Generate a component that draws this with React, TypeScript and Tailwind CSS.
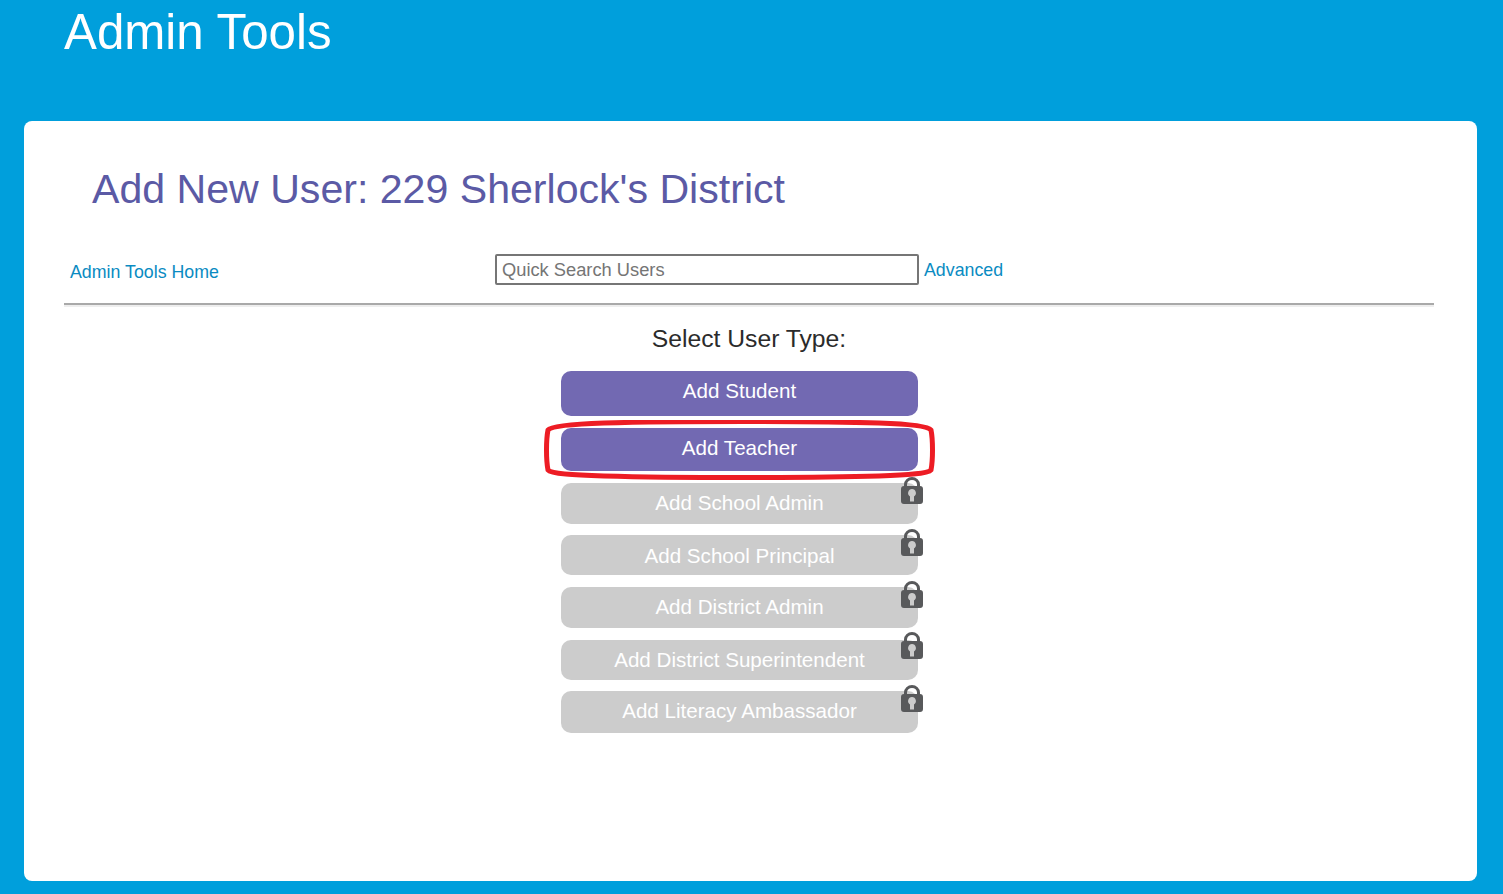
import React from "react";

function Lock({ cls }: { cls: string }) {
  return (
    <svg viewBox="0 0 22 27" className={`absolute left-[340px] h-[27px] w-[22px] ${cls}`}>
      <path d="M4.5 11V7.5a6.5 6 0 0 1 13 0V11" fill="none" stroke="#58595b" strokeWidth="3" />
      <path fillRule="evenodd" fill="#58595b" d="M3 9h16a3 3 0 0 1 3 3v12a3 3 0 0 1-3 3H3a3 3 0 0 1-3-3V12a3 3 0 0 1 3-3zM11 12a4 4 0 0 0-2 7.4V24.500h4V19.400a4 4 0 0 0-2-7.400z" />
    </svg>
  );
}

const locked: { label: string; cls: string; lock: string }[] = [
  { label: "Add School Admin", cls: "h-[41px] mt-[12px] pt-[8px]", lock: "top-[-6px]" },
  { label: "Add School Principal", cls: "h-[40px] mt-[11px] pt-[9px]", lock: "top-[-6px]" },
  { label: "Add District Admin", cls: "h-[41px] mt-[12px] pt-[8px]", lock: "top-[-6px]" },
  { label: "Add District Superintendent", cls: "h-[40px] mt-[12px] pt-[8px]", lock: "top-[-8px]" },
  { label: "Add Literacy Ambassador", cls: "h-[42px] mt-[11px] pt-[8px]", lock: "top-[-6px]" },
];

export default function App() {
  return (
    <div className="min-h-[894px] bg-[#009fdc] font-['Liberation_Sans',Arial,sans-serif] overflow-hidden">
      <header className="h-[121px] pl-[64px] pt-[4px]">
        <h1 className="text-[49.3px] leading-[55px] text-white">Admin Tools</h1>
      </header>
      <main className="ml-[24px] mr-[26px] h-[760px] rounded-[8px] bg-white pt-[44px] pl-[40px] pr-[43px]">
        <h2 className="pl-[28px] text-[41.1px] leading-[48px] text-[#5b5aa5]">Add New User: 229 Sherlock's District</h2>
        <div className="mt-[42px] flex h-[50px] items-start border-b-2 border-[#a9a9a9] shadow-[0_2px_0_#eeeeee]">
          <a className="ml-[6px] mt-[7px] w-[425px] text-[17.8px] leading-[21px] text-[#0a8bc2]">Admin Tools Home</a>
          <input
            readOnly
            placeholder="Quick Search Users"
            className="-mt-[1px] h-[31px] w-[424px] rounded-[2px] border-2 border-[#767676] px-[5px] text-[18.3px] text-[#757575] placeholder:text-[#757575] outline-none"
          />
          <a className="ml-[5px] mt-[5px] text-[17.8px] leading-[21px] text-[#0a8bc2]">Advanced</a>
        </div>
        <div className="mt-[20px] text-center text-[24.7px] leading-[28px] text-[#2b2b2b]">Select User Type:</div>
        <div className="relative ml-[497px] mt-[18px] w-[357px]">
          <button className="block h-[45px] w-full rounded-[10px] bg-[#7269b2] pb-[4px] text-center text-[20.6px] text-white">Add Student</button>
          <button className="mt-[12px] block h-[43px] w-full rounded-[10px] bg-[#7269b2] pb-[2px] text-center text-[20.6px] text-white">Add Teacher</button>
          {locked.map((b) => (
            <div key={b.label} className={`relative w-full rounded-[10px] bg-[#cccccc] text-center text-[20.6px] leading-[24px] text-white ${b.cls}`}>
              {b.label}
              <Lock cls={b.lock} />
            </div>
          ))}
          <svg viewBox="0 0 392 60" fill="none" className="absolute left-[-17px] top-[49px] h-[60px] w-[392px]">
            <path d="M60 3C130 1 270 1 335 3C365 4 384 6 387 10C389 20 389 40 387 50C384 54 360 55 335 56C270 58 130 58 60 56C30 55 7 54 4 50C2 40 2 20 4 10C7 6 30 4 60 3Z" stroke="#ed1c24" strokeWidth="5" />
          </svg>
        </div>
      </main>
    </div>
  );
}
